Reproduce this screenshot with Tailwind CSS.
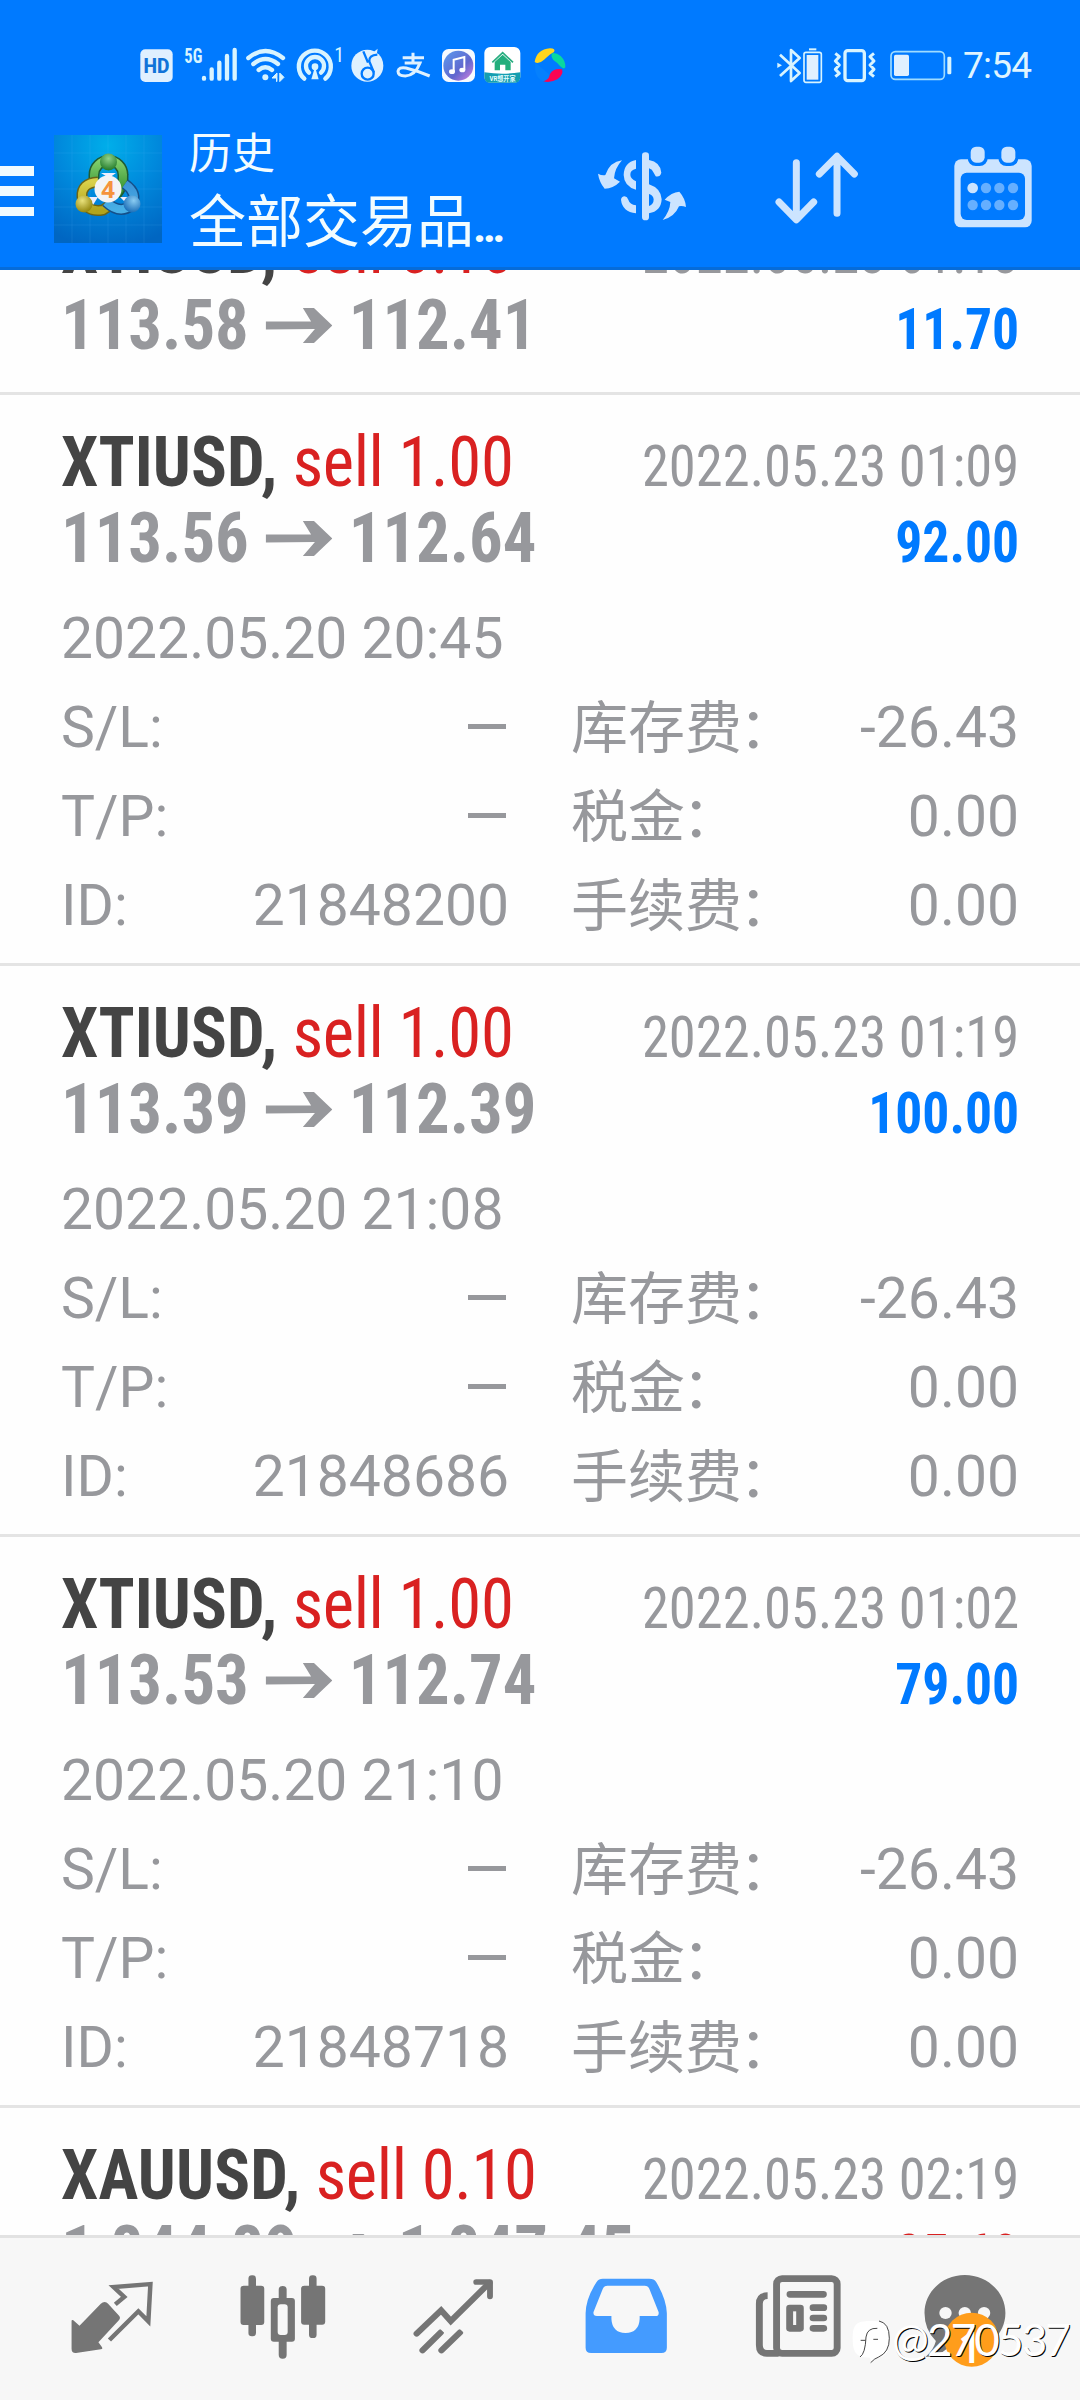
<!DOCTYPE html>
<html lang="zh-CN">
<head>
<meta charset="utf-8">
<title>历史</title>
<script src="https://cdn.jsdelivr.net/npm/@tailwindcss/browser@4"></script>
</head>
<body class="bg-white">
<div class="flex flex-col w-[1080px] h-[2400px] overflow-hidden bg-[#fefefe] font-['Roboto','Noto_Sans_CJK_SC',sans-serif]">

  <header class="relative z-10 shrink-0 h-[270px] bg-[#007aff] border-b-[3px] border-[#066cd9]">
    <!-- status bar -->
    <div class="flex h-[120px] pt-[45px] pl-[140px] pr-[47px] items-start">
      <svg class="w-[33px] h-10" viewBox="60 45 99 120"><rect x="61" y="58" width="97" height="98" rx="15" fill="#e0f0ff"/><text x="109.500" y="129" text-anchor="middle" textLength="78" lengthAdjust="spacingAndGlyphs" font-family="Roboto" font-weight="800" font-size="62" fill="#1173d8">HD</text></svg>
      <svg class="w-[54px] h-10 ml-[11px] overflow-visible" viewBox="192 45 162 120" fill="#d8f4ff"><text x="193" y="98" textLength="54" lengthAdjust="spacingAndGlyphs" font-family="Roboto Condensed" font-weight="700" font-size="60">5G</text><g stroke="#d8f4ff" stroke-width="13" stroke-linecap="round"><path d="M252 144v2M275 118v28M298 98v48M321 78v68M344 60v86"/></g></svg>
      <svg class="w-10 h-10 ml-[8px]" viewBox="380 45 120 120" fill="none" stroke="#d8f4ff" stroke-width="13" stroke-linecap="round"><path d="M387 84Q438 42 491 84M402 102Q438 72 476 102M418 120Q438 104 458 120"/><circle cx="438" cy="142" r="9" fill="#d8f4ff" stroke="none"/><path d="M472 130l-14 14h14v10zM472 130v22M482 130l12 12-12 12z" fill="#d8f4ff" stroke-width="3"/></svg>
      <svg class="w-[47px] h-10 ml-[10px] overflow-visible" viewBox="529 45 141 120" fill="none" stroke="#d8f4ff" stroke-width="13" stroke-linecap="round"><path d="M554 146A48 48 0 1 1 617 146M568 128A27 27 0 1 1 604 128"/><circle cx="586" cy="110" r="10" fill="#d8f4ff" stroke="none"/><path d="M586 110l-11 38h22z" fill="#d8f4ff" stroke="none"/><text x="644" y="95" font-family="Roboto Condensed" font-size="60" fill="#d8f4ff" stroke="none">1</text></svg>
      <svg class="w-[34px] h-10 ml-[7px]" viewBox="693 45 102 120"><circle cx="745" cy="107" r="48" fill="#dff1ff"/><path d="M752 76l24-20-4 26z" fill="#dff1ff"/><path d="M733 64l14 34M775 74q-26 2-24 20l14 34" fill="none" stroke="#007aff" stroke-width="7"/><circle cx="746" cy="131" r="18" fill="#dff1ff" stroke="#007aff" stroke-width="7"/></svg>
      <svg class="w-[36px] h-10 ml-[11px]" viewBox="829 45 108 120" fill="none" stroke="#dff1ff" stroke-width="9"><path d="M852 83h64M883 68v31M858 99h46Q890 136 860 138Q838 138 838 124Q840 110 862 114Q895 122 933 138"/></svg>
      <svg class="w-[33px] h-10 ml-[10.500px]" viewBox="966 45 99 120"><defs><linearGradient id="m" x1="0" y1="0" x2="1" y2="1"><stop stop-color="#5b9bef"/><stop offset=".6" stop-color="#6167ce"/><stop offset="1" stop-color="#d883e0"/></linearGradient></defs><rect x="966" y="57" width="99" height="99" rx="20" fill="#f6faff"/><circle cx="1015" cy="107" r="45" fill="url(#m)"/><path d="M1001 125V89l32-8v38" fill="none" stroke="#fff" stroke-width="6"/><ellipse cx="996" cy="125" rx="9" ry="7" fill="#fff"/><ellipse cx="1027" cy="120" rx="9" ry="7" fill="#fff"/></svg>
      <svg class="w-[37px] h-10 ml-[9.500px]" viewBox="1094 45 111 120"><rect x="1095" y="51" width="108" height="107" rx="18" fill="#fff"/><path d="M1095 127q54 8 108 0v13q0 18-18 18h-72q-18 0-18-18z" fill="#149eb0"/><path d="M1119 97l31-29 31 29" fill="none" stroke="#28ad80" stroke-width="5"/><path d="M1126 96l24-22 24 22v25h-16v-17h-16v17h-16z" fill="#22ae7c"/><text x="1149.500" y="153" text-anchor="middle" textLength="78" lengthAdjust="spacingAndGlyphs" font-family="Roboto,Noto Sans CJK SC" font-weight="700" font-size="20" fill="#e5ffff">VR想开家</text></svg>
      <svg class="w-[33px] h-10 ml-[11.500px]" viewBox="1239 45 99 120"><path d="M1244 96Q1250 58 1290 55Q1308 56 1302 66Q1290 72 1274 88Q1256 104 1244 96z" fill="#ffd51d"/><path d="M1298 69Q1310 68 1322 78Q1338 94 1336 112Q1332 120 1320 108Q1312 98 1300 90Q1290 76 1298 69z" fill="#08d8a0"/><path d="M1270 154Q1286 146 1290 132Q1300 114 1326 118Q1332 134 1312 148Q1290 160 1270 154z" fill="#fb0553"/><path d="M1246 98Q1240 140 1270 154Q1290 146 1288 134Q1262 110 1246 98z" fill="#0580fd"/></svg>
      <div class="flex ml-auto">
        <svg class="w-[46px] h-10" viewBox="79 45 138 120" fill="none" stroke="#d8f4ff" stroke-width="6"><path d="M88 74l59 55-26 24V60l26 24-59 54" stroke-width="8" stroke-linejoin="round"/><path d="M80 98l14 8-14 8z" fill="#d8f4ff" stroke="none"/><rect x="160" y="67" width="52" height="90" rx="6" stroke-width="5"/><rect x="168" y="75" width="35" height="74" fill="#e0f0ff" stroke="none"/><path d="M175 58h22"/></svg>
        <svg class="w-[44px] h-10 ml-[10.500px]" viewBox="247 45 132 120" fill="none" stroke="#d8f4ff" stroke-linejoin="round"><rect x="283" y="62" width="58" height="90" rx="8" stroke-width="10"/><path d="M254 70l12 10-12 13 12 12-12 13 12 12-12 10M370 70l-12 10 12 13-12 12 12 13-12 12 12 10" stroke-width="9"/></svg>
        <svg class="w-[62px] h-10 ml-[13px]" viewBox="420 45 186 120" fill="none"><rect x="423" y="65" width="160" height="83" rx="13" stroke="#9fdcff" stroke-width="5"/><rect x="432" y="74" width="45" height="64" rx="5" fill="#e0f0ff"/><rect x="592" y="80" width="12" height="53" rx="4" fill="#d8f4ff"/></svg>
        <div class="ml-[11px] pt-[2.500px] w-[70px] text-[37px] leading-[36px] tracking-[-0.020em] text-[#dff4ff]">7:54</div>
      </div>
    </div>
    <!-- toolbar -->
    <div class="flex h-[147px] pr-[46.700px]">
      <div class="flex flex-col gap-[10.500px] w-[34px] pt-[46px]">
        <div class="h-[9.800px] bg-[#f0faff]"></div><div class="h-[9.800px] bg-[#f0faff]"></div><div class="h-[9.800px] bg-[#f0faff]"></div>
      </div>
      <svg class="w-[108px] h-[108px] ml-5 mt-[15px]" viewBox="0 0 108 108">
        <defs>
          <radialGradient id="bg" cx=".5" cy=".1" r=".95"><stop stop-color="#00aeea"/><stop offset=".5" stop-color="#0088dc"/><stop offset="1" stop-color="#0066c2"/></radialGradient>
          <linearGradient id="gr" x1="0" y1="0" x2="0" y2="1"><stop stop-color="#82cf6c"/><stop offset="1" stop-color="#2d8a2b"/></linearGradient>
          <linearGradient id="ye" x1="0" y1="0" x2="0" y2="1"><stop stop-color="#d9d04a"/><stop offset="1" stop-color="#b1a41c"/></linearGradient>
          <linearGradient id="bl" x1="0" y1="0" x2="0" y2="1"><stop stop-color="#3c94d8"/><stop offset="1" stop-color="#48b0e6"/></linearGradient>
          <radialGradient id="gh" cx=".5" cy=".3" r=".7"><stop stop-color="#8fd28a"/><stop offset="1" stop-color="#237a28"/></radialGradient>
          <radialGradient id="yh" cx=".4" cy=".3" r=".7"><stop stop-color="#e9e27c"/><stop offset="1" stop-color="#93860d"/></radialGradient>
          <radialGradient id="bh" cx=".6" cy=".3" r=".7"><stop stop-color="#8accf2"/><stop offset="1" stop-color="#1c6fb8"/></radialGradient>
        </defs>
        <rect width="108" height="108" fill="url(#bg)"/>
        <path d="M18 0v108M36 0v108M54 0v108M72 0v108M90 0v108M0 18h108M0 36h108M0 54h108M0 72h108M0 90h108" stroke="#5cc0f5" stroke-opacity=".13"/>
        <path d="M40 49V40A14 14 0 0 1 69 40Q70 50 62 60" fill="none" stroke="#1f5c34" stroke-width="11"/><path d="M40 49V40A14 14 0 0 1 69 40Q70 50 62 60" fill="none" stroke="url(#gr)" stroke-width="8"/>
        <path d="M44 47Q27 48 28 62Q32 78 49 75L60 68" fill="none" stroke="#6b6416" stroke-width="11"/><path d="M44 47Q27 48 28 62Q32 78 49 75L60 68" fill="none" stroke="url(#ye)" stroke-width="8"/>
        <path d="M71 49Q84 58 78 70Q66 80 52 67" fill="none" stroke="#15508a" stroke-width="11"/><path d="M71 49Q84 58 78 70Q66 80 52 67" fill="none" stroke="url(#bl)" stroke-width="8"/>
        <path d="M47 38h15l-7 5zM35 62l9 0-5 8zM66 62l10 0-4 6z" fill="#eef"/>
        <circle cx="54.500" cy="27" r="8.500" fill="url(#gh)"/><circle cx="30" cy="69" r="8.500" fill="url(#yh)"/><circle cx="78" cy="69" r="8.500" fill="url(#bh)"/>
        <circle cx="54" cy="54" r="13.500" fill="#f3f3f5"/><text x="54" y="63" text-anchor="middle" font-family="Open Sans" font-weight="700" font-size="24" fill="#f5933b">4</text>
      </svg>
      <div class="ml-[27px] w-[330px] text-[#f2fcff] font-['Noto_Sans_CJK_SC',sans-serif]">
        <div class="h-[60px] text-[43px] leading-[60px]">历史</div>
        <div class="flex items-baseline text-[57px] leading-[74px] whitespace-nowrap"><span>全部交易品</span><span class="font-['Roboto'] font-bold text-[46px] tracking-[-0.080em] -ml-px">...</span></div>
      </div>
      <svg class="w-[95px] h-[86.700px] ml-auto mt-[23.300px]" viewBox="105 70 285 260" fill="#cce4ff">
        <path d="M186 122Q150 126 136 166Q126 168 114 162Q118 188 134 207Q160 206 180 186L162 176Q164 146 186 122zM308 301Q344 292 357 260Q366 258 378 262Q376 236 358 216Q334 218 314 240L331 247Q330 274 308 301z"/>
        <rect x="246" y="98" width="21" height="204" rx="10"/>
        <path d="M228 121v26q-18 4-17 19q1 12 17 19v25q-36-10-37-44q1-38 37-45zM183 240q1-9 11-10 8 1 11 10 4 14 23 17v24q-41-5-45-41z"/>
        <path d="M267 121q34 6 37 38-4 14-17 11l-6-11q-4-10-14-13zM267 194q36 12 38 45-2 36-38 42v-22q14-4 14-20-1-12-14-16z"/>
      </svg>
      <svg class="w-[86.700px] h-[86.700px] ml-[83.300px] mt-[23.300px]" viewBox="640 70 260 260" fill="none" stroke="#cce4ff" stroke-width="21" stroke-linecap="round" stroke-linejoin="round"><path d="M710 129v168M658 247l52 53 52-53M832 281V113M779 163l53-53 52 53"/></svg>
      <svg class="w-[81.700px] h-[86.700px] ml-[91.700px] mt-[23.300px]" viewBox="1175 70 245 260">
        <rect x="1182" y="119" width="232" height="204" rx="20" fill="#cce4ff"/><rect x="1201" y="159" width="193" height="142" rx="18" fill="#007aff"/>
        <rect x="1222" y="72" width="60" height="67" rx="24" fill="#007aff"/><rect x="1314" y="72" width="60" height="67" rx="24" fill="#007aff"/>
        <rect x="1231" y="81" width="42" height="48" rx="16" fill="#cce4ff"/><rect x="1323" y="81" width="42" height="48" rx="16" fill="#cce4ff"/>
        <circle cx="1237" cy="205" r="16" fill="#cce4ff"/>
        <g fill="#66afff"><circle cx="1277" cy="205" r="15.500"/><circle cx="1317" cy="205" r="15.500"/><circle cx="1358" cy="205" r="15.500"/><circle cx="1237" cy="256" r="15.500"/><circle cx="1277" cy="256" r="15.500"/><circle cx="1317" cy="256" r="15.500"/><circle cx="1358" cy="256" r="15.500"/></g>
      </svg>
    </div>
  </header>

  <main id="list" class="h-[1965px] shrink-0 overflow-hidden text-[#97989c]"></main>

  <nav class="relative shrink-0 flex h-[165px] px-[27px] pt-[32px] bg-[#f7f7f7] border-t-[3px] border-[#e2e2e2]">
    <div class="flex-1 flex justify-center"><svg class="w-[96.400px] h-[106.700px]" preserveAspectRatio="none" viewBox="187 540 280 320" fill="#757575"><path d="M305 636q6 0 10 5l30 34q8 8 2 15l-60 67 10 14q4 6-3 7l-72 11q-13 1-13-13v-83q0-5 5-2l18 16 62-66q5-5 11-5z"/><path d="M336 643l26-22-31-30 107-9-6 112-29-30-84 86" fill="none" stroke="#757575" stroke-width="13"/></svg></div>
    <div class="flex-1 flex justify-center"><svg class="w-[96.400px] h-[106.700px]" preserveAspectRatio="none" viewBox="683 540 280 320" fill="#757575"><rect x="722" y="556" width="22" height="183" rx="10"/><rect x="699" y="587" width="69" height="118" rx="9"/><rect x="898" y="556" width="22" height="188" rx="10"/><rect x="875" y="587" width="70" height="117" rx="9"/><rect x="810" y="588" width="23" height="218" rx="11"/><rect x="787" y="624" width="70" height="131" rx="9"/><rect x="807" y="643" width="29" height="92" rx="9" fill="#f7f7f7"/></svg></div>
    <div class="flex-1 flex justify-center"><svg class="w-[96.400px] h-[106.700px]" preserveAspectRatio="none" viewBox="1180 540 280 320" fill="none" stroke="#757575" stroke-width="18" stroke-linecap="round"><path d="M1211 731l71-70 28 32 112-114"/><path d="M1384 576h40v43" stroke-width="17" stroke-linejoin="round"/><path d="M1228 781l53-54M1283 781l54-54"/><path d="M1278 710l18 18M1335 710l18 18" stroke="#f7f7f7" stroke-width="8"/></svg></div>
    <div class="flex-1 flex justify-center"><svg class="w-[96.400px] h-[106.700px]" preserveAspectRatio="none" viewBox="108 540 280 320"><path d="M183 566h135q14 0 20 10 30 52 31 94v103q0 16-16 16H149q-16 0-16-16V670q1-46 32-94 6-10 18-10z" fill="#449bff"/><path d="M196 587h109q9 0 13 9l27 70q2 12-9 12h-46v9q-2 41-41 42-39-1-41-42v-9h-42q-12 0-10-12l27-70q4-9 13-9z" fill="#f7f7f7"/></svg></div>
    <div class="flex-1 flex justify-center"><svg class="w-[96.400px] h-[106.700px]" preserveAspectRatio="none" viewBox="605 540 280 320" fill="none" stroke="#757575" stroke-width="20"><rect x="688" y="566" width="176" height="224" rx="16"/><path d="M662 617q-24 0-24 24v125q0 24 22 24h34"/><path d="M727 613h97M794 653h31M794 684h31M794 715h31" stroke-linecap="round"/><rect x="716" y="644" width="51" height="81" rx="10" fill="#757575" stroke="none"/><path d="M736 664h9v41h-9z" fill="#f7f7f7" stroke="none"/></svg></div>
    <div class="flex-1 flex justify-center"><svg class="w-[96.400px] h-[106.700px]" preserveAspectRatio="none" viewBox="1101 540 280 320"><path d="M1234 555c64 0 118 50 118 114s-54 114-118 114q-20 0-50-8-26 24-64 26 24-22 30-48-33-34-33-84c0-64 53-114 117-114z" fill="#757575"/><g fill="#f7f7f7"><circle cx="1178" cy="669" r="18"/><circle cx="1234" cy="669" r="18"/><circle cx="1290" cy="669" r="18"/></g><ellipse cx="1254" cy="749" rx="79" ry="81" fill="#ff9d1b"/><text x="1250" y="819" text-anchor="middle" font-family="Noto Sans" font-weight="500" font-size="132" fill="#fff">1</text></svg></div>
    <!-- watermark -->
    <div class="absolute left-[852px] top-[82px] flex items-start">
      <svg class="w-[38px] h-[44px]" viewBox="22 35 114 132"><path d="M75 38c42 0 59 5 59 52 0 40-10 56-34 58q-8 4-20 16l-4-16c-36 0-52-10-52-56 0-45 12-54 51-54z" fill="#fff"/><path d="M103 38q31 6 31 52 0 42-32 56-12 4-24 17M46 146q16-10 18-60 4-28 34-26M48 96h14M86 93h14" fill="none" stroke="#222" stroke-width="2.500"/></svg>
      <div class="ml-[2px] -mt-[5px] text-[44px] leading-[48px] font-['Lato'] tracking-[-0.042em] text-white whitespace-nowrap [text-shadow:1px_1px_0_#000]">@270537</div>
    </div>
  </nav>
</div>

<script>
const arrow = '<svg class="w-[70px] h-[36px] ml-[18px] mr-[17px]" viewBox="0 0 69 36" preserveAspectRatio="none" fill="#97989c"><path d="M0 14.500 47 14.500 38.500 1H50L69 18.500 50 36H38.500L51 22 0 22.500z"/></svg>';
const detail = (l, v, l2, v2) => `
  <div class="flex h-[89px] leading-[89px]">
    <div class="flex justify-between w-[448px]"><span>${l}</span>${v ? `<span>${v}</span>` : '<span class="w-[38px] h-[4.500px] mt-[41px] mr-[3px] bg-[#97989c]"></span>'}</div>
    <div class="flex justify-between ml-[62px] w-[448px]"><span class="-mt-[4px] h-[89px] font-['Noto_Sans_CJK_SC']">${l2}<span class="-ml-[3px]">：</span></span><span>${v2}</span></div>
  </div>`;
const entry = e => `
  <section class="${e.cls} box-border pt-[29px] pl-[61px] pr-[61px] border-b-[3px] border-[#e4e4e4]">
    <div class="flex justify-between h-[152px] font-['Roboto_Condensed'] leading-[76px] whitespace-nowrap">
      <div class="text-[70px] -mr-[60px] origin-left scale-x-[0.952]">
        <div class="h-[76px]"><span class="font-bold tracking-[0.002em] text-[#444]">${e.sym},</span> <span class="tracking-[-0.005em] text-[#d92121]">sell ${e.lot}</span></div>
        <div class="h-[76px] flex items-center font-bold"><span>${e.from}</span>${arrow}<span>${e.to}</span></div>
      </div>
      <div class="text-[57px] text-right pt-[5px]">
        <div class="h-[76px] origin-right scale-x-[0.957]">${e.close}</div>
        <div class="h-[76px] origin-right scale-x-[0.940] font-bold ${e.color}">${e.profit}</div>
      </div>
    </div>
    ${e.id ? `<div class="pt-[19px] text-[57px]">
      <div class="h-[88px] leading-[88px]">${e.open}</div>
      ${detail('S/L:', '', '库存费', '-26.43')}
      ${detail('T/P:', '', '税金', '0.00')}
      ${detail('ID:', e.id, '手续费', '0.00')}
    </div>` : ''}
  </section>`;
const blue = 'text-[#007aff]', full = 'h-[571px]';
list.innerHTML = [
  {cls: 'h-[213px] -mt-[88px]', sym: 'XTIUSD', lot: '0.10', from: '113.58', to: '112.41', close: '2022.05.23 01:13', profit: '11.70', color: blue},
  {cls: full, sym: 'XTIUSD', lot: '1.00', from: '113.56', to: '112.64', close: '2022.05.23 01:09', profit: '92.00', color: blue, open: '2022.05.20 20:45', id: '21848200'},
  {cls: full, sym: 'XTIUSD', lot: '1.00', from: '113.39', to: '112.39', close: '2022.05.23 01:19', profit: '100.00', color: blue, open: '2022.05.20 21:08', id: '21848686'},
  {cls: full, sym: 'XTIUSD', lot: '1.00', from: '113.53', to: '112.74', close: '2022.05.23 01:02', profit: '79.00', color: blue, open: '2022.05.20 21:10', id: '21848718'},
  {cls: full, sym: 'XAUUSD', lot: '0.10', from: '1 844.89', to: '1 847.45', close: '2022.05.23 02:19', profit: '-25.60', color: 'text-[#d92121]'}
].map(entry).join('');
</script>
</body>
</html>
